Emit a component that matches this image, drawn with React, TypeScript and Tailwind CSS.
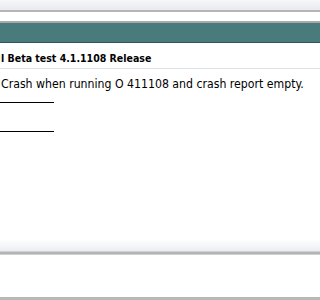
import React from 'react';

export default function App() {
  return (
    <div className="w-[320px] h-[300px] overflow-hidden bg-white flex flex-col" style={{ fontFamily: '"DejaVu Sans Condensed", "DejaVu Sans", Tahoma, sans-serif' }}>
      {/* top chrome */}
      <div className="h-[10px] bg-gradient-to-b from-[#f6f7f9] to-[#e8eaee]" />
      <div className="h-[2px] bg-[#b5b5b5]" />
      <div className="h-[9px] bg-white" />
      <div className="h-[2px] bg-[#aaaaaa]" />
      <div className="h-[20px] bg-[#4a7b7c] border-b border-[#2f5556]" />

      {/* title */}
      <div className="pt-[9px] pl-[1px] text-[10.5px] font-bold text-black leading-[13px] whitespace-nowrap">
        l Beta test 4.1.1108 Release
      </div>
      <div className="mt-[3px] h-px bg-[#dde1e6]" />

      {/* body */}
      <div className="pt-[8px] pl-[1px] text-[12.2px] text-black leading-[15px] whitespace-nowrap">
        Crash when running O 411108 and crash report empty.
      </div>
      <div className="mt-[10px] w-[54px] h-px bg-black" />
      <div className="mt-[28px] w-[54px] h-px bg-black" />

      <div className="flex-1" />

      {/* bottom chrome */}
      <div className="h-[12px] bg-gradient-to-b from-white to-[#eceef3]" />
      <div className="h-[4px] bg-[#b4b4b4] border-y border-[#d0d0d0]" />
      <div className="h-[42px] bg-white" />
      <div className="h-[3px] bg-[#b8b8b8]" />
    </div>
  );
}
